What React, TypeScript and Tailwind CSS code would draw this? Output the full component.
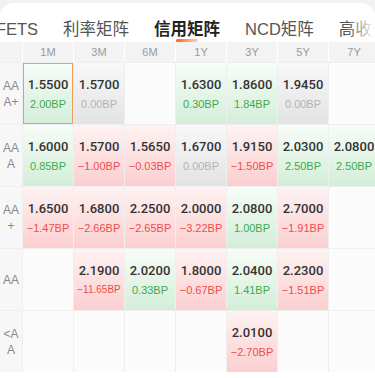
import React from 'react'

type Tone = 'up' | 'down' | 'flat'

type Cell = {
  rate: string
  bp: string
  tone: Tone
  active?: boolean
} | null

type Row = {
  label: string[]
  cells: Cell[]
}

const tabs = ['CFETS', '利率矩阵', '信用矩阵', 'NCD矩阵', '高收益']
const terms = ['1M', '3M', '6M', '1Y', '3Y', '5Y', '7Y']

const rows: Row[] = [
  {
    label: ['AA', 'A+'],
    cells: [
      { rate: '1.5500', bp: '2.00BP', tone: 'up', active: true },
      { rate: '1.5700', bp: '0.00BP', tone: 'flat' },
      null,
      { rate: '1.6300', bp: '0.30BP', tone: 'up' },
      { rate: '1.8600', bp: '1.84BP', tone: 'up' },
      { rate: '1.9450', bp: '0.00BP', tone: 'flat' },
      null,
    ],
  },
  {
    label: ['AA', 'A'],
    cells: [
      { rate: '1.6000', bp: '0.85BP', tone: 'up' },
      { rate: '1.5700', bp: '−1.00BP', tone: 'down' },
      { rate: '1.5650', bp: '−0.03BP', tone: 'down' },
      { rate: '1.6700', bp: '0.00BP', tone: 'flat' },
      { rate: '1.9150', bp: '−1.50BP', tone: 'down' },
      { rate: '2.0300', bp: '2.50BP', tone: 'up' },
      { rate: '2.0800', bp: '2.50BP', tone: 'up' },
    ],
  },
  {
    label: ['AA', '+'],
    cells: [
      { rate: '1.6500', bp: '−1.47BP', tone: 'down' },
      { rate: '1.6800', bp: '−2.66BP', tone: 'down' },
      { rate: '2.2500', bp: '−2.65BP', tone: 'down' },
      { rate: '2.0000', bp: '−3.22BP', tone: 'down' },
      { rate: '2.0800', bp: '1.00BP', tone: 'up' },
      { rate: '2.7000', bp: '−1.91BP', tone: 'down' },
      null,
    ],
  },
  {
    label: ['AA'],
    cells: [
      null,
      { rate: '2.1900', bp: '−11.65BP', tone: 'down' },
      { rate: '2.0200', bp: '0.33BP', tone: 'up' },
      { rate: '1.8000', bp: '−0.67BP', tone: 'down' },
      { rate: '2.0400', bp: '1.41BP', tone: 'up' },
      { rate: '2.2300', bp: '−1.51BP', tone: 'down' },
      null,
    ],
  },
  {
    label: ['<A', 'A'],
    cells: [
      null,
      null,
      null,
      null,
      { rate: '2.0100', bp: '−2.70BP', tone: 'down' },
      null,
      null,
    ],
  },
]

const toneBg: Record<Tone, string> = {
  up: 'bg-linear-to-b from-[#f7fcf8] to-[#d3eed8]',
  down: 'bg-linear-to-b from-[#fef2f2] to-[#fbcfd0]',
  flat: 'bg-linear-to-b from-[#f8f8f8] to-[#e3e3e3]',
}

const toneText: Record<Tone, string> = {
  up: 'text-[#3dab4b]',
  down: 'text-[#ee4d4f]',
  flat: 'text-[#b3b3b3]',
}

function RateCell({ cell }: { cell: Cell }): JSX.Element {
  if (!cell) return <div className="bg-[#fbfbfb]" />
  return (
    <div
      className={`${toneBg[cell.tone]} flex flex-col items-center justify-center gap-[4px] ${
        cell.active ? 'outline outline-1 -outline-offset-1 outline-[#f29a5e]' : ''
      }`}
    >
      <span className="font-['Roboto'] text-[13px] leading-[16px] font-medium text-[#333]">
        {cell.rate}
      </span>
      <span
        className={`${cell.bp.length > 7 ? 'text-[10px]' : 'text-[11px]'} leading-[14px] ${toneText[cell.tone]}`}
      >
        {cell.bp}
      </span>
    </div>
  )
}

export default function App(): JSX.Element {
  return (
    <div
      className="w-[375px] h-[378px] overflow-hidden bg-[#f2f2f2]"
      style={{ fontFamily: '"Liberation Sans", "Noto Sans CJK SC", sans-serif' }}
    >
      <div className="mt-[3px] rounded-t-[14px] bg-white h-[375px] overflow-hidden">
        <div className="relative h-[39px] overflow-hidden">
          <div className="flex gap-[25px] ml-[-16px] pt-[15px] whitespace-nowrap">
            {tabs.map((t, i) => (
              <div key={t} className="relative h-[24px]">
                <span
                  className={`text-[16.5px] leading-[20px] ${
                    i === 2 ? 'font-bold text-[#222]' : 'text-[#555]'
                  }`}
                >
                  {t}
                </span>
                {i === 2 && (
                  <div className="absolute bottom-0 left-1/2 -translate-x-1/2 w-[22px] h-[3px] rounded-full bg-linear-to-r from-[#ff5a1a] to-[#ffd2b8]" />
                )}
              </div>
            ))}
          </div>
          <div className="absolute right-0 top-0 h-full w-[28px] bg-linear-to-l from-white to-transparent" />
        </div>

        <div className="grid grid-cols-[22px_repeat(7,50px)] gap-px bg-white">
          <div className="bg-[#f3f3f3] h-[20px]" />
          {terms.map((t) => (
            <div
              key={t}
              className="bg-[#f3f3f3] h-[20px] flex items-center justify-center text-[11px] text-[#9a9a9a]"
            >
              {t}
            </div>
          ))}
        </div>

        <div className="grid grid-cols-[22px_repeat(7,50px)] auto-rows-[61px] gap-px bg-[#efefef] pt-px">
          {rows.map((row, ri) => (
            <React.Fragment key={ri}>
              <div className="bg-[#f7f7f7] flex flex-col items-center justify-center text-[12px] leading-[16px] text-[#888]">
                {row.label.map((l) => (
                  <span key={l}>{l}</span>
                ))}
              </div>
              {row.cells.map((c, ci) => (
                <RateCell key={ci} cell={c} />
              ))}
            </React.Fragment>
          ))}
        </div>
      </div>
    </div>
  )
}
